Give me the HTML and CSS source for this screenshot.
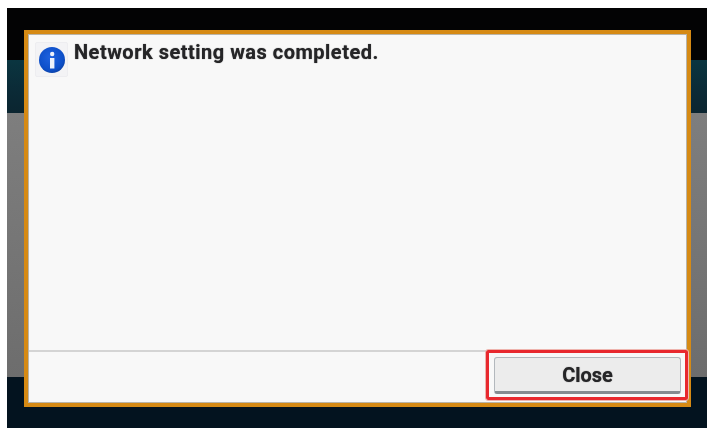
FILE: index.html
```html
<!DOCTYPE html>
<html lang="en">
<head>
<meta charset="utf-8">
<title>Network setting</title>
<link rel="stylesheet" href="styles.css">
</head>
<body>
<div class="screen">
  <div class="band band-top"></div>
  <div class="band band-teal"></div>
  <div class="band band-gray"></div>
  <div class="band band-bottom"></div>
  <div class="dialog">
    <div class="message">
      <span class="icon-tile">
        <svg class="info-icon" viewBox="0 0 26 26" aria-hidden="true">
          <defs>
            <radialGradient id="blue" cx="45%" cy="40%" r="65%">
              <stop offset="0" stop-color="#1f63e0"/>
              <stop offset="0.75" stop-color="#0d4fc8"/>
              <stop offset="1" stop-color="#0b3e9e"/>
            </radialGradient>
          </defs>
          <circle cx="13" cy="13" r="13" fill="url(#blue)"/>
          <circle cx="13.2" cy="7" r="2.2" fill="#eef2fa"/>
          <path d="M11 11h4.4v10.5H11z" fill="#eef2fa"/>
        </svg>
      </span>
      <p class="text">Network setting was completed.</p>
    </div>
    <div class="footer">
      <div class="highlight">
        <button class="close" type="button">Close</button>
      </div>
    </div>
  </div>
</div>
</body>
</html>
```

FILE: styles.css
```css
* { box-sizing: border-box; }
html, body { margin: 0; height: 100%; background: #fff; overflow: hidden; }
body { padding: 8px 0 4px 7px; font-family: Roboto, "Liberation Sans", sans-serif; }

.screen {
  position: relative;
  height: 420px;
  display: flex;
  flex-direction: column;
}
.band { flex: none; }
.band-top { height: 52px; background: #030304; }
.band-teal { height: 53px; background: linear-gradient(#0a3540, #0b2a36 60%, #0b2530); }
.band-gray { height: 264px; background: linear-gradient(#7e7e7e, #6d6d6d); }
.band-bottom { height: 51px; background: #03131f; }

.dialog {
  position: absolute;
  left: 17px;
  top: 22px;
  width: 667px;
  height: 377px;
  display: flex;
  flex-direction: column;
  background: #f8f8f8;
  border: 4px solid #d68a14;
  box-shadow: inset 0 0 0 1px #b9b4a8;
}
.message {
  flex: 1;
  display: flex;
  align-items: flex-start;
  padding: 8px 0 0 7px;
}
.icon-tile {
  flex: none;
  width: 33px;
  height: 35px;
  display: flex;
  align-items: center;
  justify-content: center;
  background: #f3f3f5;
  border: 1px solid #ededf0;
  border-radius: 2px;
}
.info-icon { width: 26px; height: 26px; display: block; }
.text {
  margin: -2px 0 0 6px;
  font-size: 20px;
  line-height: 24px;
  font-weight: 700;
  letter-spacing: 0.5px;
  color: #252527;
  text-shadow: 0 0 1px #555;
  filter: blur(0.5px);
}
.footer {
  flex: none;
  height: 53px;
  display: flex;
  justify-content: flex-end;
  border-top: 2px solid #d4d4d4;
  margin-left: 1px;
  margin-right: 1px;
}
.highlight {
  width: 202px;
  height: 50px;
  margin: -2px -2px 0 0;
  padding: 4px 4px 3px 5px;
  border: 3px solid #e8282e;
  border-radius: 2px;
  outline: 1px solid #eeb4ae;
  position: relative;
  display: flex;
}
.close {
  flex: 1;
  margin: 0;
  font: 700 20px/1 Roboto, "Liberation Sans", sans-serif;
  color: #252527;
  text-shadow: 0 0 1px #555;
  background: #ececec;
  border: 1px solid #b3b8bd;
  border-bottom: 3px solid #858b90;
  border-radius: 3px;
  padding: 0;
  filter: blur(0.5px);
}
```
